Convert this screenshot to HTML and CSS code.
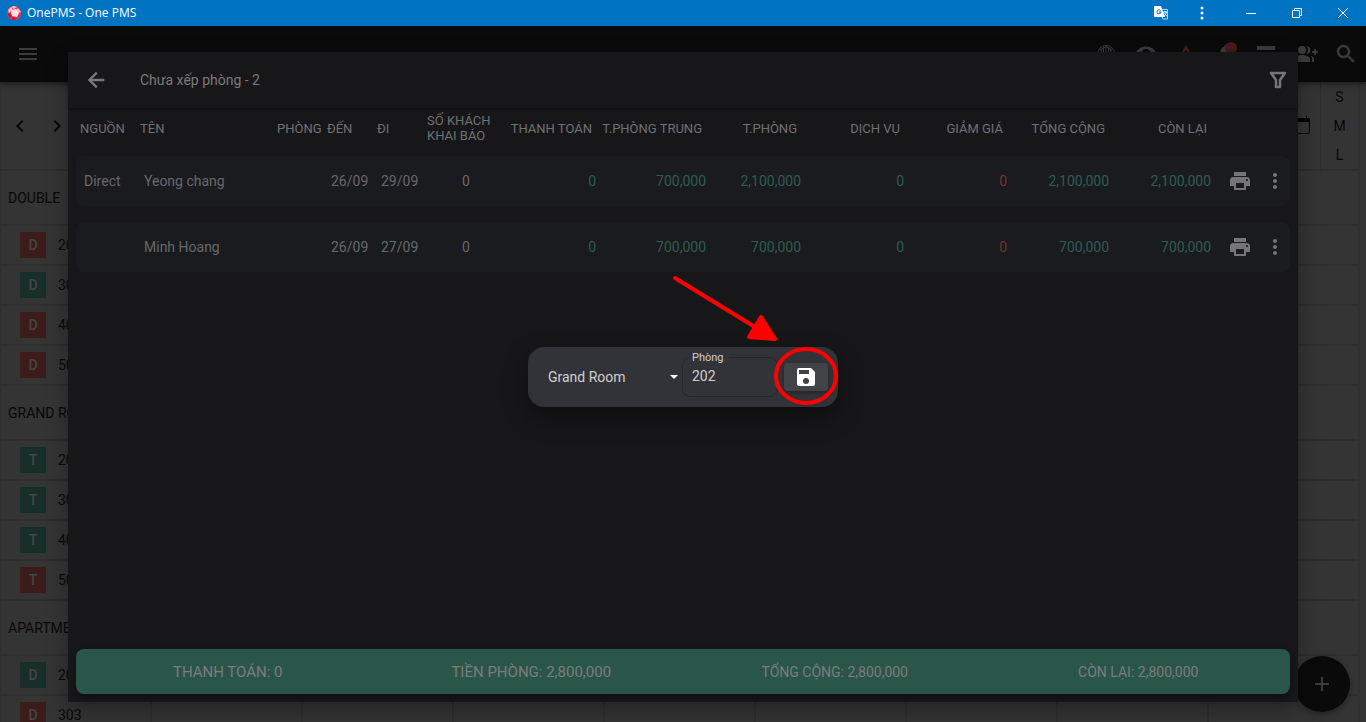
FILE: index.html
```html
<!DOCTYPE html>
<html lang="vi">
<head>
<meta charset="utf-8">
<title>OnePMS - One PMS</title>
<link rel="stylesheet" href="styles.css">
</head>
<body>
<svg width="0" height="0" class="defs" aria-hidden="true">
  <symbol id="print" viewBox="0 0 24 24"><path d="M19 8H5c-1.660 0-3 1.340-3 3v6h4v4h12v-4h4v-6c0-1.660-1.340-3-3-3zm-3 11H8v-5h8v5zm3-7c-.55 0-1-.45-1-1s.45-1 1-1 1 .45 1 1-.45 1-1 1zm-1-9H6v4h12V3z"/></symbol>
  <symbol id="more" viewBox="0 0 24 24"><path d="M12 8c1.100 0 2-.9 2-2s-.9-2-2-2-2 .9-2 2 .9 2 2 2zm0 2c-1.100 0-2 .9-2 2s.9 2 2 2 2-.9 2-2-.9-2-2-2zm0 6c-1.100 0-2 .9-2 2s.9 2 2 2 2-.9 2-2-.9-2-2-2z"/></symbol>
</svg>
<header class="titlebar">
  <svg class="gem" viewBox="0 0 16 16"><circle cx="8" cy="8" r="7" fill="#e0405e"/><path d="M8 1l3 1-3 2-3-2zM2 5l3-3 2 3-4 3zM12 3l3 4-3 1-2-3z" fill="#ffb9c6"/><path d="M6 5l4-1 3 4-2 4-5-1-1-3z" fill="#ffdfe6"/><path d="M1 9l3-1 2 3-2 2zM6 12l5 1-2 2H6zM12 11l2-2-1 3z" fill="#d3122f"/></svg>
  <span class="app-title">OnePMS - One PMS</span>
  <nav class="win-tools">
    <button class="win-btn" aria-label="Translate"><svg width="16" height="16" viewBox="0 0 16 16"><path d="M1 1h6l4 11H1a1 1 0 0 1-1-1V2a1 1 0 0 1 1-1z" fill="#fff"/><path d="M8 4.500h5.500v9.500H9l-1-2" fill="none" stroke="#a9d3f0"/><path d="M6.500 5.500a2 2 0 1 0 .5 1.500H5" fill="none" stroke="#0173c3"/><path d="M9 7h4M11 6v1M12.500 7c-.5 2-1.500 3-2.500 4M10.500 8.500l2.500 3" fill="none" stroke="#fff"/></svg></button>
    <button class="win-btn" aria-label="Menu"><svg width="16" height="16" viewBox="0 0 16 16" fill="#fff"><circle cx="8" cy="3" r="1.500"/><circle cx="8" cy="8" r="1.500"/><circle cx="8" cy="13" r="1.500"/></svg></button>
    <button class="win-btn wide" aria-label="Minimize"><svg width="12" height="12" viewBox="0 0 12 12" stroke="#fff"><path d="M1 6.500h10"/></svg></button>
    <button class="win-btn wide" aria-label="Restore"><svg width="12" height="12" viewBox="0 0 12 12" stroke="#fff" fill="none"><path d="M1.500 3.500h7v7h-7zM3.500 3.500v-2h7v7h-2"/></svg></button>
    <button class="win-btn wide" aria-label="Close"><svg width="12" height="12" viewBox="0 0 12 12" stroke="#fff"><path d="M1 1l10 10M11 1L1 11"/></svg></button>
  </nav>
</header>

<div class="app">
  <div class="appbar">
    <button class="bar-btn" aria-label="Menu"><svg width="24" height="24" viewBox="0 0 24 24"><path d="M3 18h18v-2H3v2zm0-5h18v-2H3v2zm0-7v2h18V6H3z"/></svg></button>
    <div class="bar-icons">
      <svg width="24" height="24" viewBox="0 0 24 24" fill="none" stroke="#3b3b3b"><circle cx="12" cy="12" r="8.500"/><path d="M12 3v18M7 10a5 5 0 0 1 10 0M9.500 5v5M14.500 5v5M6 8l3-2M18 8l-3-2"/></svg>
      <svg width="24" height="24" viewBox="0 0 24 24"><path d="M12 4.500C7 4.500 2.700 7.600 1 12c1.700 4.400 6 7.500 11 7.500s9.300-3.100 11-7.500c-1.700-4.400-6-7.500-11-7.500zM12 17a5 5 0 1 1 0-10 5 5 0 0 1 0 10z"/></svg>
      <svg width="24" height="24" viewBox="0 0 24 24" fill="#4a1b1b"><path d="M12 3L1 21h22zM12 8l7 12H5z" fill-rule="evenodd"/></svg>
      <svg width="24" height="24" viewBox="0 0 24 24"><path d="M18 16v-5c0-3-1.600-5.600-4.500-6.300V4a1.500 1.500 0 0 0-3 0v.7C7.600 5.400 6 8 6 11v5l-2 2v1h16v-1z"/><circle cx="17" cy="6" r="6" fill="#481a1a"/></svg>
      <svg width="24" height="24" viewBox="0 0 24 24"><path d="M3 4h18v4H3zM3 10h18v4H3zM3 16h18v4H3z"/></svg>
      <svg width="24" height="24" viewBox="0 0 24 24"><path d="M22 9V7h-2v2h-2v2h2v2h2v-2h2V9zM8 12a4 4 0 1 0 0-8 4 4 0 0 0 0 8zm0 1c-2.700 0-8 1.300-8 4v3h16v-3c0-2.700-5.300-4-8-4zM12.500 4a6 6 0 0 1 0 8c2 .2 3.900-1.500 3.900-4s-1.900-4.200-3.900-4zM16.500 13.800c.9.800 1.500 1.900 1.500 3.200v3h2v-3c0-1.500-1.500-2.500-3.500-3.200z"/></svg>
      <svg width="24" height="24" viewBox="0 0 24 24" stroke="#3b3b3b" stroke-width=".5"><path d="M15.500 14h-.8l-.3-.3A6.500 6.500 0 1 0 13.700 14.400l.3.300v.8l5 5 1.500-1.500-5-5zm-6 0a4.500 4.500 0 1 1 0-9 4.500 4.500 0 0 1 0 9z"/></svg>
    </div>
  </div>

  <main class="plan">
    <div class="plan-head">
      <div class="pager">
        <button class="plain" aria-label="Trước"><svg width="24" height="24" viewBox="0 0 24 24"><path d="M15.400 7.400L14 6l-6 6 6 6 1.400-1.400L10.800 12z"/></svg></button>
        <button class="plain" aria-label="Sau"><svg width="24" height="24" viewBox="0 0 24 24"><path d="M10 6L8.600 7.400l4.600 4.600-4.600 4.600L10 18l6-6z"/></svg></button>
      </div>
      <svg class="calendar" width="24" height="24" viewBox="0 0 24 24"><path d="M19 4h-1V2h-1v2H8V2H6v2H5a2 2 0 0 0-2 2v12a2 2 0 0 0 2 2h14a2 2 0 0 0 2-2V6a2 2 0 0 0-2-2zm1 15H5V8h15z"/></svg>
      <div class="sizes"><button class="plain">S</button><button class="plain">M</button><button class="plain">L</button></div>
    </div>
    <div class="group"><span>DOUBLE</span><i class="count"></i></div>
    <div class="room"><b class="tag busy">D</b>202</div>
    <div class="room"><b class="tag">D</b>302</div>
    <div class="room"><b class="tag busy">D</b>402</div>
    <div class="room"><b class="tag busy">D</b>502</div>
    <div class="group"><span>GRAND ROOM</span><i class="count"></i></div>
    <div class="room"><b class="tag">T</b>201</div>
    <div class="room"><b class="tag">T</b>301</div>
    <div class="room"><b class="tag">T</b>401</div>
    <div class="room"><b class="tag busy">T</b>501</div>
    <div class="group"><span>APARTMENT</span><i class="count"></i></div>
    <div class="room"><b class="tag">D</b>203</div>
    <div class="room"><b class="tag busy">D</b>303</div>
  </main>
  <button class="fab" aria-label="Thêm"><svg width="24" height="24" viewBox="0 0 24 24"><path d="M19 13h-6v6h-2v-6H5v-2h6V5h2v6h6z"/></svg></button>

  <div class="layer">
    <section class="dialog" aria-label="Chưa xếp phòng">
      <div class="dialog-head">
        <button class="plain" aria-label="Quay lại"><svg width="24" height="24" viewBox="0 0 24 24" stroke="#757575" stroke-width=".5"><path d="M20 11H7.800l5.600-5.600L12 4l-8 8 8 8 1.400-1.400L7.800 13H20z"/></svg></button>
        <h1>Chưa xếp phòng - 2</h1>
        <button class="plain" aria-label="Lọc"><svg width="24" height="24" viewBox="0 0 24 24" fill="none" stroke="#757575" stroke-width="2.500" stroke-linejoin="round"><path d="M5 5h14l-5 7v7h-4v-7z"/></svg></button>
      </div>
      <div class="dialog-body">
        <table class="bookings">
          <colgroup><col class="c60"><col><col class="c50"><col class="c50"><col class="c50"><col class="c86"><col class="c91"><col class="c110"><col class="c95"><col class="c103"><col class="c103"><col class="c102"><col class="c102"><col class="c50"><col class="c25"></colgroup>
          <thead><tr><th>NGUỒN</th><th>TÊN</th><th>PHÒNG</th><th>ĐẾN</th><th>ĐI</th><th>SỐ KHÁCH<br>KHAI BÁO</th><th class="num">THANH TOÁN</th><th class="num">T.PHÒNG TRUNG</th><th class="num">T.PHÒNG</th><th class="num">DỊCH VỤ</th><th class="num">GIẢM GIÁ</th><th class="num">TỔNG CỘNG</th><th class="num">CÒN LẠI</th><th></th><th></th></tr></thead>
          <tbody>
            <tr><td>Direct</td><td>Yeong chang</td><td></td><td>26/09</td><td>29/09</td><td class="mid">0</td><td class="num">0</td><td class="num">700,000</td><td class="num">2,100,000</td><td class="num">0</td><td class="num red">0</td><td class="num">2,100,000</td><td class="num">2,100,000</td><td class="act"><button class="plain" aria-label="In"><svg width="24" height="24"><use href="#print"/></svg></button></td><td class="act"><button class="plain" aria-label="Thêm"><svg width="24" height="24"><use href="#more"/></svg></button></td></tr>
            <tr><td></td><td>Minh Hoang</td><td></td><td>26/09</td><td>27/09</td><td class="mid">0</td><td class="num">0</td><td class="num">700,000</td><td class="num">700,000</td><td class="num">0</td><td class="num red">0</td><td class="num">700,000</td><td class="num">700,000</td><td class="act"><button class="plain" aria-label="In"><svg width="24" height="24"><use href="#print"/></svg></button></td><td class="act"><button class="plain" aria-label="Thêm"><svg width="24" height="24"><use href="#more"/></svg></button></td></tr>
          </tbody>
        </table>
      </div>
      <footer class="totals"><span class="paid">THANH TOÁN: 0</span><span class="paid">TIỀN PHÒNG: 2,800,000</span><span>TỔNG CỘNG: 2,800,000</span><span>CÒN LẠI: 2,800,000</span></footer>
    </section>
  </div>

  <div class="layer popup-layer">
    <form class="popup">
      <div class="picker">
        <select aria-label="Loại phòng"><option>Grand Room</option></select>
        <svg class="caret" width="24" height="24" viewBox="0 0 24 24"><path d="M8 10l4 4 4-4z"/></svg>
      </div>
      <div class="field"><label for="room">Phòng</label><input id="room" type="text" value="202"></div>
      <button type="button" class="save" aria-label="Lưu"><svg width="24" height="24" viewBox="0 0 24 24"><path d="M17 3H5a2 2 0 0 0-2 2v14a2 2 0 0 0 2 2h14a2 2 0 0 0 2-2V7zm-5 16a3 3 0 1 1 0-6 3 3 0 0 1 0 6zm3-10H5V5h10z"/></svg></button>
      <svg class="pointer" width="170" height="140" viewBox="0 0 170 140" fill="none" stroke="#f00" stroke-width="4" stroke-linecap="round" stroke-linejoin="round"><path d="M5 3l80 49"/><path d="M91 42l14 22-26-2z" fill="#f00"/><ellipse cx="136" cy="101" rx="30" ry="27"/></svg>
    </form>
  </div>
</div>
</body>
</html>
```

FILE: styles.css
```css
* { box-sizing: border-box; }

body {
  margin: 0;
  height: 100vh;
  display: flex;
  flex-direction: column;
  overflow: hidden;
  background: #343434;
  font: 14px/20px Roboto, "Noto Sans", sans-serif;
}

button, input, select { font: inherit; color: inherit; }

.defs { position: absolute; }

.plain, .win-btn, .bar-btn {
  display: grid;
  place-items: center;
  padding: 0;
  border: 0;
  background: none;
  color: inherit;
  fill: currentColor;
}

/* Window title bar */
.titlebar {
  flex: none;
  height: 26px;
  display: flex;
  align-items: center;
  padding-left: 6px;
  background: #0173c3;
  color: #fff;
}
.gem { width: 16px; height: 16px; }
.app-title { margin-left: 5px; font: 12px/16px "Open Sans", "Noto Sans", sans-serif; }
.win-tools { display: flex; margin-left: auto; }
.win-btn { width: 40px; height: 26px; }
.win-btn.wide { width: 46px; }
.win-btn:nth-child(2) { margin-right: 6px; }

/* Application behind the dialog */
.app {
  position: relative;
  flex: 1;
  min-height: 0;
  display: flex;
  flex-direction: column;
  overflow: hidden;
}
.appbar {
  flex: none;
  z-index: 1;
  height: 56px;
  display: flex;
  align-items: center;
  justify-content: space-between;
  padding: 0 8px 0 16px;
  background: #0a0a0a;
  box-shadow: 0 2px 6px rgba(0, 0, 0, .5);
  color: #3b3b3b;
  fill: #3b3b3b;
}
.bar-icons { display: flex; gap: 16px; }

.plan {
  flex: 1;
  min-height: 0;
  overflow: hidden;
  margin-right: 6px;
  border-right: 2px solid #303030;
  border-left: 1px solid #303030;
  color: #080808;
}
.plan-head { display: flex; align-items: center; height: 89px; border-bottom: 2px solid #2e2e2e; }
.pager { display: flex; gap: 13px; margin-left: 7px; }
.calendar { margin: 0 7px 0 auto; }
.sizes {
  width: 38px;
  height: 87px;
  display: flex;
  flex-direction: column;
  border-left: 1px solid #2e2e2e;
}
.sizes .plain { flex: 1; }
.group {
  height: 55px;
  display: flex;
  align-items: center;
  justify-content: space-between;
  padding: 0 60px 0 7px;
  border-bottom: 2px solid #2e2e2e;
}
.count { width: 16px; height: 14px; background: #1b3c35; }
.room {
  height: 40px;
  display: flex;
  align-items: center;
  gap: 12px;
  padding-left: 19px;
  border-bottom: 2px solid #2e2e2e;
  background: repeating-linear-gradient(90deg, transparent 0 149px, #2e2e2e 149px 151px);
}
.tag {
  width: 26px;
  height: 26px;
  background: #182e28;
  color: #454545;
  font-weight: 500;
  line-height: 26px;
  text-align: center;
}
.tag.busy { background: #3c1b1b; }
.fab {
  position: absolute;
  right: 16px;
  bottom: 10px;
  width: 56px;
  height: 56px;
  display: grid;
  place-items: center;
  border: 0;
  border-radius: 50%;
  background: #0a0a0a;
  box-shadow: 0 3px 6px rgba(0, 0, 0, .3);
  fill: #3b3b3b;
}

/* Booking list dialog */
.layer {
  position: absolute;
  inset: 0;
  z-index: 2;
  display: flex;
  padding: 26px 68px 20px;
}
.dialog {
  flex: 1;
  display: flex;
  flex-direction: column;
  background: #171719;
  color: #67686a;
  box-shadow: 0 8px 20px rgba(0, 0, 0, .3);
}
.dialog-head {
  display: flex;
  align-items: center;
  height: 56px;
  padding: 0 8px 0 16px;
  box-shadow: 0 1px 3px rgba(0, 0, 0, .3);
  color: #7a7a7a;
}
.dialog-head h1 { flex: 1; margin: 0 0 0 32px; font-size: 14px; font-weight: 400; }
.dialog-body { flex: 1; padding: 0 8px; }
.bookings { width: 100%; table-layout: fixed; border-spacing: 0; }
.c25 { width: 25px; }
.c50 { width: 50px; }
.c60 { width: 60px; }
.c86 { width: 86px; }
.c91 { width: 91px; }
.c95 { width: 95px; }
.c102 { width: 102px; }
.c103 { width: 103px; }
.c110 { width: 110px; }
.bookings th {
  height: 48px;
  padding: 0 0 8px 4px;
  color: #707173;
  font-size: 13px;
  line-height: 15px;
  font-weight: 400;
  text-align: left;
  white-space: nowrap;
}
.bookings td {
  height: 66px;
  padding: 0 0 0 8px;
  border-bottom: 16px solid transparent;
  background: #1a1b1f;
  background-clip: padding-box;
  white-space: nowrap;
}
.bookings td:first-child { border-radius: 8px 0 0 8px / 8px 0 0 24px; }
.bookings td:last-child { border-radius: 0 8px 8px 0 / 0 8px 24px 0; }
.bookings th.num { padding: 0 8px 8px 0; text-align: right; }
.bookings td.num { padding: 0 4px 0 0; text-align: right; color: #2f5c50; }
.bookings td.red { color: #7a3032; }
.bookings td.mid { padding: 0; text-align: center; }
.bookings td.act { padding: 0; color: #757575; }
.act .plain { width: 100%; }
.act:last-child .plain { justify-content: start; padding: 0; }
.act:last-child svg { margin-left: -2px; }
.totals {
  display: grid;
  grid-template-columns: repeat(4, 1fr);
  margin: 0 8px 8px;
  padding: 13px 0 11px;
  border-radius: 8px;
  background: #2a5649;
  color: #7c7c7c;
  line-height: 21px;
  text-align: center;
  box-shadow: 0 3px 6px rgba(0, 0, 0, .4);
}
.totals .paid { font-size: 15px; }

/* Room assignment popup */
.popup-layer { z-index: 3; align-items: center; justify-content: center; }
.popup {
  position: relative;
  display: flex;
  align-items: center;
  height: 60px;
  padding: 0 10px;
  border-radius: 16px;
  background: #323338;
  color: #cfcfd1;
  box-shadow: 0 10px 24px rgba(0, 0, 0, .4);
}
.picker { position: relative; display: flex; width: 144px; }
.picker select {
  width: 100%;
  height: 40px;
  padding: 0 24px 0 10px;
  border: 0;
  appearance: none;
  background: none;
}
.caret { position: absolute; right: -4px; top: 8px; fill: #fff; pointer-events: none; }
.field { position: relative; width: 96px; }
.field label {
  position: absolute;
  left: 6px;
  top: -5px;
  padding: 0 5px 0 4px;
  background: #323338;
  font-size: 11px;
  line-height: 12px;
}
.field input {
  display: block;
  width: 100%;
  height: 40px;
  padding: 0 9px 2px;
  border: 1px solid #26272a;
  border-radius: 8px;
  background: none;
}
.save {
  display: grid;
  place-items: center;
  width: 44px;
  height: 28px;
  margin-left: 6px;
  padding: 0;
  border: 0;
  border-radius: 4px;
  background: #424347;
  fill: #fff;
  box-shadow: 0 2px 4px rgba(0, 0, 0, .3);
}
.pointer { position: absolute; right: -2px; top: -72px; pointer-events: none; }
```
